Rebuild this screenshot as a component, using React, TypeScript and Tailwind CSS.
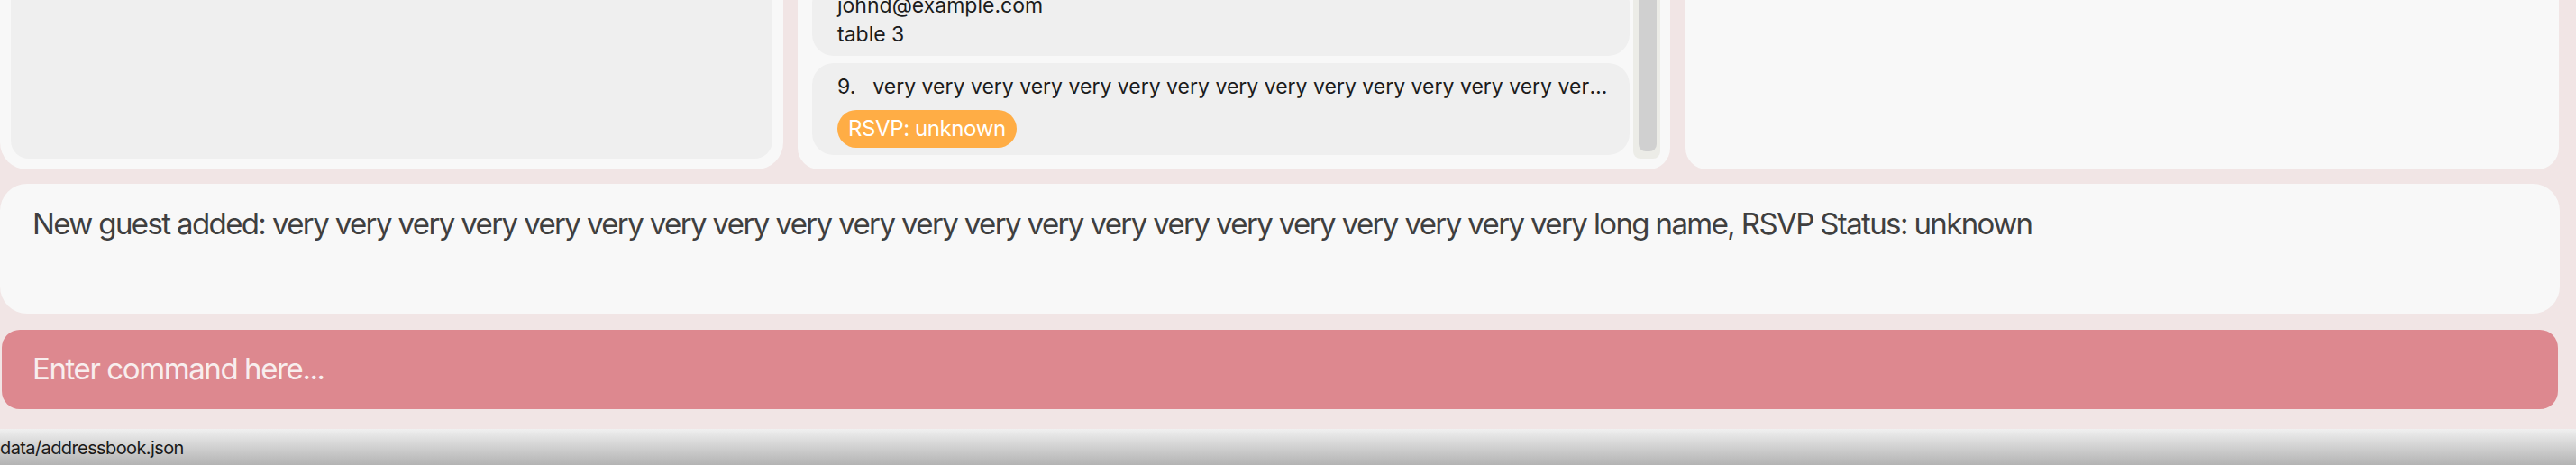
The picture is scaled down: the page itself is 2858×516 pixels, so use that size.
import type { ReactNode } from 'react';

interface GuestCardProps {
  children: ReactNode;
}

function GuestCard({ children }: GuestCardProps) {
  return (
    <div className="shrink-0 rounded-[24px] bg-[#efefef] pl-[28px] pr-3 pt-[10px] pb-2 text-[23px] leading-[32px] text-[#1c1c1c]">
      {children}
    </div>
  );
}

function GuestList() {
  return (
    <div className="flex h-full min-w-0 flex-1 flex-col justify-end gap-2 overflow-hidden pb-1">
      <GuestCard>
        <p>johnd@example.com</p>
        <p>table 3</p>
      </GuestCard>
      <GuestCard>
        <div className="flex gap-[19px]">
          <span className="shrink-0">9.</span>
          <span className="truncate">
            very very very very very very very very very very very very very very very very very very very very very long name
          </span>
        </div>
        <span className="mt-[10px] inline-flex h-[42px] items-center rounded-full bg-[#ffad45] px-3 text-[24px] tracking-[-0.4px] text-white">
          RSVP: unknown
        </span>
      </GuestCard>
    </div>
  );
}

function App() {
  return (
    <div className="flex h-[516px] w-full flex-col overflow-hidden bg-[#f1e5e5] font-['Inter',sans-serif]">
      <div className="flex h-[188px] shrink-0 gap-4 pr-[19px]">
        <div className="w-[869px] shrink-0 rounded-b-[30px] bg-[#f8f8f8] px-3 pb-3">
          <div className="h-full rounded-b-[20px] bg-[#efefef]" />
        </div>

        <div className="flex w-[968px] shrink-0 gap-1 rounded-b-[24px] bg-[#f8f8f8] pl-4 pr-[11px] pb-3">
          <GuestList />
          <div className="flex w-[30px] shrink-0 rounded-b-[8px] bg-[#ecece7] pl-[6px] pr-1 pb-2">
            <div className="flex-1 rounded-b-[8px] bg-[#d0d0d0]" />
          </div>
        </div>

        <div className="ml-px flex-1 rounded-b-[24px] bg-[#f8f8f8]" />
      </div>

      <div className="mt-4 mr-[18px] h-[144px] shrink-0 rounded-[30px] bg-[#f8f8f8] pl-9 pt-[20px] text-[33px] tracking-[-1.62px] text-[#3f3f3f]">
        New guest added: very very very very very very very very very very very very very very very very very very very very very long name, RSVP Status: unknown
      </div>

      <div className="mt-[18px] ml-[2px] mr-[20px] flex h-[88px] shrink-0 items-center rounded-[20px] bg-[#dd888f] pl-[34px]">
        <input
          className="w-full bg-transparent text-[33px] tracking-[-1.4px] text-white outline-none placeholder:text-[#f8eeee]"
          placeholder="Enter command here..."
        />
      </div>

      <div className="mt-[22px] flex h-10 shrink-0 items-center bg-gradient-to-b from-[#f0f0f0] to-[#b3b3b3] pt-[2px] text-[20px] tracking-[-0.6px] text-[#1a1a1a]">
        data/addressbook.json
      </div>
    </div>
  );
}

export default App;
